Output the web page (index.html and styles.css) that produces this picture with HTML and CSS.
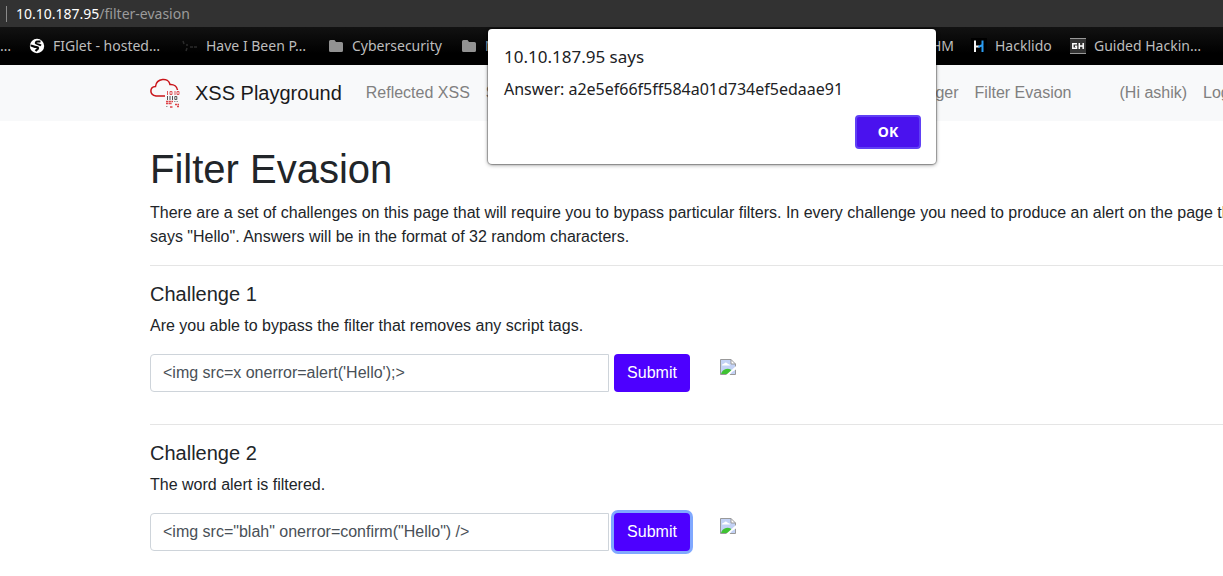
FILE: index.html
```html
<!DOCTYPE html>
<html lang="en">
<head>
<meta charset="utf-8">
<title>Filter Evasion</title>
<link rel="stylesheet" href="styles.css">
</head>
<body>
<div class="address"><span class="divider"></span><span class="host">10.10.187.95</span><span>/filter-evasion</span></div>
<nav class="bookmarks" aria-label="Bookmarks">
  <span class="cut">…</span>
  <a class="bm bm-a" href="#"><svg width="16" height="16" viewBox="0 0 16 16"><circle cx="8" cy="8" r="7.200" fill="#fff"/><path d="M1.500 7.500C4 7.500 4.500 9 7.500 9c2 0 2 1.500.5 2.500L6.500 13" fill="none" stroke="#050505" stroke-width="2.200"/><path d="M11.500 3.500H9C6.500 3.500 6 5 7.500 5.800c1.500.7 3 .4 4.500 1.700" fill="none" stroke="#050505" stroke-width="1.800"/></svg>FIGlet - hosted…</a>
  <a class="bm bm-b" href="#"><svg width="16" height="16" viewBox="0 0 16 16"><path d="M1 3l1 3M5 6v2M5 10l-1 3M8 9h3M12 9h3" fill="none" stroke="#2b2b2b" stroke-width="1.500"/></svg>Have I Been P…</a>
  <a class="bm bm-c" href="#"><svg width="16" height="16" viewBox="0 0 16 16"><path d="M1 3.500Q1 2 2.500 2h4L8 4h5.500Q15 4 15 5.500v7q0 1.500-1.500 1.500h-11Q1 14 1 12.500z" fill="#929292"/></svg>Cybersecurity</a>
  <a class="bm" href="#"><svg width="16" height="16" viewBox="0 0 16 16"><path d="M1 3.500Q1 2 2.500 2h4L8 4h5.500Q15 4 15 5.500v7q0 1.500-1.500 1.500h-11Q1 14 1 12.500z" fill="#929292"/></svg>N</a>
  <a class="bm bm-end" href="#">THM</a>
  <a class="bm bm-h" href="#"><svg width="16" height="16" viewBox="0 0 16 16"><path fill="#000" d="M0 0h16v16H0z"/><path d="M4 2.500V14M4 8.500h4" stroke="#f4f4f4" stroke-width="2"/><path d="M7.500 9l4-2V2.500M11.500 6v8" fill="none" stroke="#2b9df4" stroke-width="2"/></svg>Hacklido</a>
  <a class="bm bm-g" href="#"><svg width="16" height="16" viewBox="0 0 16 16"><path fill="#333" d="M0 0h16v16H0z"/><path d="M0 .5h16M0 15.500h16" stroke="#999"/><path d="M7 5.800H2.800v4.400h3.700V8.300H5M9.300 5v6M13.200 5v6M9.300 8h4" fill="none" stroke="#fff" stroke-width="1.500"/></svg>Guided Hackin…</a>
</nav>
<header class="navbar">
  <div class="container nav-row">
    <a class="brand" href="#"><svg width="30" height="30" viewBox="0 0 30 30"><path d="M15 18H6C-1 17-.5 9 5.500 8.500 6.500 0 18.500-1 20 6.500c4-.3 7 2 7.500 5.500" fill="none" stroke="#c91419" stroke-width="1.500"/><path d="M17.500 13v4M20 13.500h2v3h-2zM25 13v4M27 13.500h2v3h-2z" fill="none" stroke="#df5458"/><path d="M17.500 18v4M20 18v4M22.500 18v4M24.800 18.500h2v3h-2z" fill="none" stroke="#555"/><path d="M16 23.500h7M16 25.500h6M25 26.500h4M20 29h3M27 28.500h2" fill="none" stroke="#dd4347" stroke-width="1.500" stroke-dasharray="2.200 .5"/><path d="M24 23.500h5M16 28.500h2" stroke="#999" stroke-dasharray="1.500 1"/></svg>XSS Playground</a>
    <a class="link" href="#">Reflected XSS</a>
    <a class="link" href="#">Stored XSS</a>
    <a class="link push" href="#">Key Logger</a>
    <a class="link" href="#">Filter Evasion</a>
    <span class="link user">(Hi ashik)</span>
    <a class="link" href="#">Logout</a>
  </div>
</header>
<main class="container content">
  <h1>Filter Evasion</h1>
  <p>There are a set of challenges on this page that will require you to bypass particular filters. In every challenge you need to produce an alert on the page that says "Hello". Answers will be in the format of 32 random characters.</p>
  <hr>
  <h2>Challenge 1</h2>
  <p><label for="c1">Are you able to bypass the filter that removes any script tags.</label></p>
  <form class="row">
    <input id="c1" type="text" value="&lt;img src=x onerror=alert('Hello');&gt;">
    <button class="submit" type="button">Submit</button>
    <svg class="broken" width="16" height="16" viewBox="0 0 16 16"><path d="M.5.500h10.500l4.500 4.500v10.500H.5z" fill="#c3d2f5"/><path d="M2 6.500q0-2 2-1.800Q6 2 8 5q2 0 2 1.500z" fill="#fff"/><path d="M1 15q1-4 5-5 4-1 6 2l-4 3z" fill="#3fc232"/><path d="M11 .5V5h4.500z" fill="#fff"/><path d="M11 .5V5h4.500M.5 15.500V.5H11l4.500 4.500v10.500H.5" fill="none" stroke="#999"/><path d="M6 16l4-3.500L16 7v3.500L12 13l-2.500 3z" fill="#fff"/></svg>
  </form>
  <hr>
  <h2>Challenge 2</h2>
  <p><label for="c2">The word alert is filtered.</label></p>
  <form class="row">
    <input id="c2" type="text" value="&lt;img src=&quot;blah&quot; onerror=confirm(&quot;Hello&quot;) /&gt;">
    <button class="submit focused" type="button">Submit</button>
    <svg class="broken" width="16" height="16" viewBox="0 0 16 16"><path d="M.5.500h10.500l4.500 4.500v10.500H.5z" fill="#c3d2f5"/><path d="M2 6.500q0-2 2-1.800Q6 2 8 5q2 0 2 1.500z" fill="#fff"/><path d="M1 15q1-4 5-5 4-1 6 2l-4 3z" fill="#3fc232"/><path d="M11 .5V5h4.500z" fill="#fff"/><path d="M11 .5V5h4.500M.5 15.500V.5H11l4.500 4.500v10.500H.5" fill="none" stroke="#999"/><path d="M6 16l4-3.500L16 7v3.500L12 13l-2.500 3z" fill="#fff"/></svg>
  </form>
</main>
<div class="dialog" role="alertdialog" aria-labelledby="dt">
  <div class="dialog-title" id="dt">10.10.187.95 says</div>
  <div class="dialog-text">Answer: a2e5ef66f5ff584a01d734ef5edaae91</div>
  <button class="ok" type="button">OK</button>
</div>
</body>
</html>
```
FILE: styles.css
```css
* { box-sizing: border-box; }
body {
  margin: 0;
  overflow: hidden;
  background: #fff;
  color: #212529;
  font: 16px/24px "Liberation Sans", Arial, sans-serif;
}
a { color: inherit; text-decoration: none; }
svg { flex: none; }

.address {
  display: flex;
  align-items: center;
  height: 27px;
  padding-left: 6px;
  background: #323232;
  color: #9b9b9b;
  font: 14px/20px "Noto Sans", sans-serif;
}
.divider { width: 1px; height: 16px; margin-right: 9px; background: #8a8a8a; }
.host { color: #fff; }

.bookmarks {
  display: flex;
  align-items: center;
  height: 38px;
  padding-right: 16px;
  background: linear-gradient(#121212, #000 70%);
  color: #bdbdbd;
  font: 14px/20px "Noto Sans", sans-serif;
  white-space: nowrap;
}
.cut { flex: 0 0 29px; }
.bm { display: flex; align-items: center; gap: 8px; }
.bm-a { flex: 0 0 153px; }
.bm-b { flex: 0 0 146px; }
.bm-c { flex: 0 0 133px; }
.bm-end { margin-left: auto; margin-right: 17px; }
.bm-h { flex: 0 0 99px; }
.bm-g { flex: 0 0 137px; }

.container { width: 1110px; margin-left: 150px; }
.navbar { padding: 8px 0; background: #f8f9fa; }
.nav-row { display: flex; align-items: center; height: 40px; white-space: nowrap; }
.brand {
  display: flex;
  align-items: center;
  gap: 15px;
  margin-right: 16px;
  color: #1a1a1a;
  font-size: 20px;
}
.link { padding: 0 8px; color: #808080; }
.push { margin-left: auto; }
.user { margin-left: 32px; }

.content { padding-top: 24px; }
h1, h2 { margin: 0 0 8px; font-weight: 400; }
h1 { font-size: 40px; line-height: 48px; }
h2 { font-size: 20px; line-height: 24px; }
p { margin: 0 0 16px; }
hr { margin: 16px 0; border: 0; border-top: 1px solid #e5e5e5; }
.row { display: flex; align-items: flex-start; margin-bottom: 32px; }
.row input {
  width: 459px;
  height: 38px;
  margin-right: 5px;
  padding: 6px 12px;
  border: 1px solid #ced4da;
  border-radius: 4px 0 0 4px;
  background: #fff;
  color: #495057;
  font: inherit;
}
.submit {
  width: 76px;
  height: 38px;
  padding: 0;
  border: 0;
  border-radius: 4px;
  background: #4d00ff;
  color: #fff;
  font: inherit;
}
.focused { box-shadow: 0 0 0 3px #80a8ff; }
.broken { margin: 5px 0 0 30px; }

.dialog {
  position: absolute;
  top: 29px;
  left: 488px;
  display: flex;
  flex-direction: column;
  width: 448px;
  padding: 16px 15px 15px 16px;
  border-radius: 4px;
  background: #fff;
  box-shadow: 0 0 1px 1px rgba(0, 0, 0, .3), 0 1px 4px rgba(0, 0, 0, .4);
  color: #202124;
  font: 16px/24px "Noto Sans", sans-serif;
}
.dialog-title { margin-bottom: 8px; font-size: 17px; }
.dialog-text { margin-bottom: 14px; }
.ok {
  align-self: flex-end;
  width: 66px;
  height: 34px;
  padding: 0;
  border: 2px solid #6040f5;
  border-radius: 4px;
  background: #4a12ee;
  color: #fff;
  font: 700 14px/20px "Noto Sans", sans-serif;
}
```
